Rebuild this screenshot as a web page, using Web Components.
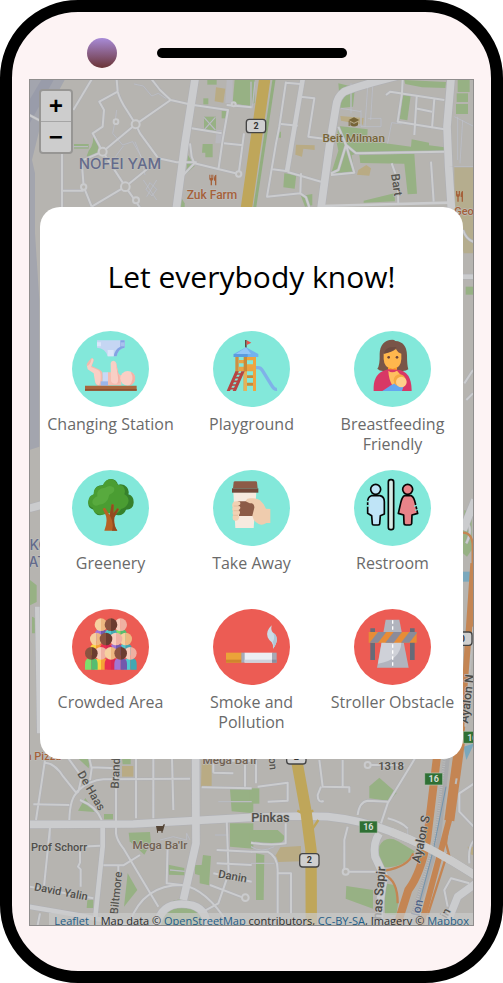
<!DOCTYPE html>
<html lang="en">
<head>
<meta charset="utf-8">
<meta name="viewport" content="width=device-width, initial-scale=1">
<title>Let everybody know!</title>
<style>
  body { margin: 0; background: #fff; font-family: "Open Sans", "Noto Sans", sans-serif; }
</style>
</head>
<body>
<phone-frame>
  <city-map></city-map>
  <report-dialog heading="Let everybody know!">
    <report-tile icon="changing">Changing Station</report-tile>
    <report-tile icon="playground">Playground</report-tile>
    <report-tile icon="feeding">Breastfeeding Friendly</report-tile>
    <report-tile icon="tree">Greenery</report-tile>
    <report-tile icon="coffee">Take Away</report-tile>
    <report-tile icon="restroom">Restroom</report-tile>
    <report-tile icon="crowd" alert>Crowded Area</report-tile>
    <report-tile icon="smoke" alert>Smoke and Pollution</report-tile>
    <report-tile icon="obstacle" alert>Stroller Obstacle</report-tile>
  </report-dialog>
</phone-frame>

<script>
class PhoneFrame extends HTMLElement {
  constructor() {
    super();
    this.attachShadow({ mode: "open" }).innerHTML = `
      <style>
        :host { display: flex; flex-direction: column; box-sizing: border-box; min-height: 100vh;
          border: 12px solid #000; border-radius: 78px; background: #fdf3f4; padding: 0 17px 45px; }
        header { display: grid; grid-template-columns: 1fr 190px 1fr; align-items: center;
          height: 67px; padding-top: 14px; box-sizing: border-box; }
        .camera { width: 30px; height: 30px; border-radius: 50%; margin-left: 58px;
          background: linear-gradient(#a88bd8, #6b3436); }
        .speaker { height: 10px; border-radius: 5px; background: #000; }
        main { flex: 1; display: grid; border: 1px solid #8f8d8d; overflow: hidden; }
        ::slotted(*) { grid-area: 1 / 1; }
      </style>
      <header><span class="camera"></span><span class="speaker"></span></header>
      <main><slot></slot></main>`;
  }
}

/* Map geometry is in thirds of a pixel; each group of shapes has its own origin. */
const areas = [
  { at: [0, 0], water: ["M88 238H195L150 320 118 390 96 480 105 520 105 700 118 900 118 1340 88 1350z"],
    deep: ["M125 238H162L88 372V300z"],
    green: ["M278 395Q302 425 292 458 275 480 260 468L266 452Q285 430 278 395z", "M222 432h44v14h-44z", "M622 240h28v14h-28z", "M610 295h15v18h-15z",
      "M665 333h15v22h-15z", "M704 238h60v70l-16 12-50-12z", "M612 350h36v42h-36z", "M608 432h30v40h-22v-14h-10z",
      "M564 465l20 34-26 22z", "M542 590l12 20v20h-14z", "M90 1740l20 16 0 50-20 10z", "M96 1850q24 6 14 50h-14z"],
    tan: ["M648 262l28 4-6 42-26-4z"], pale: ["M680 240h18v70h-22z", "M650 390h16v40h-20z"] },
  { at: [753, 0],
    green: ["M262 250l50 12-6 58-38 4z", "M455 285l24 2-10 74-23-4z", "M460 240l125 6-2 18-70-2-50-10z",
      "M620 240h36v36h-36z", "M617 280h34v26h-34z", "M615 312h36v30h-36z",
      "M262 378l20 2 68 8-2 34 132 18 2-22 52 10v8l46 6v16H320l-18 8 8 52-70 4 22-70-6-30z",
      "M325 465l165-4 8 120-28 2-10-92-132-2z", "M100 520l36 4-5 42-34-4z", "M150 588l34-6v34l-22 4z",
      "M338 602l92-22 2 24-94 4z", "M78 395h12v18h-14z", "M640 1530l22 10v110l-14 20-14-12z", "M644 860h26v24h-26z"],
    tan: ["M268 348l70 6-2 20-66-12z", "M135 434l56 2v14l-34-4-4 24-20-6z", "M322 510l24-15 14 10-5 22-37-3z"],
    pale2: ["M610 500h58v260h-30l-28-130z"], pale: [], blue: ["M636 1715h34v30h-34z", "M638 2240l32-10-24 50z"] },
  { at: [0, 2220],
    green: ["M234 212l22-38 28 42z", "M312 222h27v16h-27z", "M386 278l64-2 3 32-20 36-44-40z", "M383 400l29 50-40 50z",
      "M505 374l48 10v22l-46-2z", "M585 375h20l4-30 24 3-6 88-28-6v-24l-14-4z", "M690 148h70v72l-65-6z",
      "M690 250h70v76l-70-6z", "M262 480h18v24h-20z", "M366 55h26v18h-24z", "M234 55h36l-4 30z", "M480 520a66 50 0 0 1 130 0v40H480z"],
    tan: ["M366 78h34v32h-34z", "M605 60h30v80h-32z"] },
  { at: [753, 2220],
    green: ["M355 175v-36l30-26 52 46-22 24z", "M385 318q20-34 56-14l50 30q-34 56-96 46-14-20-10-62z", "M286 438l80 12v56l-82-30z",
      "M-4 270h84l24 22-20 26-88-4z", "M15 340l25 5-2 135H15z", "M400 430l34 6 8 50-6 40-34-4z", "M-4 145h29v46H-4z"],
    tan: ["M74 346l14-24 62-4v46l-68 2z", "M650 320h20v26l-16-4z"] }
];

const lanes = [
  { at: [0, 0], thin: ["M350 330l-4 30-8 40 30 35 30-10 34 60M346 470l24-32M405 425l20 50 10 50M430 540l40 60M470 540l-30 50M402 252l28 6 25 30 20-8 24 16", "M220 440h44M450 548l20 20-14 20-18-20z", "M612 352l34 38M646 352l-34 38"],
    minor: ["M275 238L220 330", "M350 238L353 275Q360 300 380 330L407 373 308 455M353 275L298 305 312 330 308 380 278 400 308 455",
      "M455 238L480 270 512 300 407 373M512 300L565 312", "M407 373L420 400 475 475 530 487H590", "M308 455L376 560 475 480M376 560L425 630M376 560L275 620",
      "M308 455L245 482 251 560 275 620M186 460V630M186 572H251M88 345L120 362", "M575 314L684 330 668 420 655 510M575 385L665 400M672 430L730 436M583 490L716 522 732 400M570 430L575 470 583 490 550 525M680 315L755 322"],
    wide: ["M585 238L555 430 527 640", "M88 1525L125 1515"], mid: ["M112 1820L118 2200"] },
  { at: [753, 0], thin: ["M350 260l-8 120M365 260l-6 100M300 250v90M270 325l60 10M330 330v50h60v-25h-40M410 430l12-62 30 4M610 350l60 30M620 350v130M635 360l-8 130M610 500h60M0 245v80M12 245l-8 80"],
    minor: ["M105 245L85 380 75 430 48 590 148 580 165 592 176 625M105 248L148 252M148 290L190 295 172 410 230 418M90 372L140 377M65 508L110 514M150 520L148 580M110 516L210 545",
      "M405 285L418 275 580 300M455 238L453 280 440 365 580 388M497 290L490 405M493 325L543 335M550 296L543 385",
      "M285 435L315 460 580 455M285 435L262 380M285 435L262 510 240 520M285 435L310 518 240 525M422 490L440 540 442 615M540 485L548 605", "M636 690q10 30 34 36M640 1150l26-40M646 1200l20-20M640 1560q30 20 6 70"],
    mid: ["M155 238L108 515", "M636 830H670"], minor2: [],
    wide: ["M440 228Q330 255 280 275 258 290 255 320L235 440 208 640", "M600 238L588 380 593 500 602 640", "M636 1590L672 1500"] },
  { at: [0, 2220], thin: ["M480 300l40-10 40 10v-20l10 20M510 390l44 4M150 262l4 60M645 285h40M655 185h100"],
    minor: ["M135 60L108 240M135 68Q165 70 190 110L230 160M205 55L245 110 235 155Q210 170 208 240M100 193L208 195M230 155Q270 120 310 118L570 116M268 55L275 85 270 120M275 82L350 85M348 55V280Q350 300 370 325L475 500M408 55V235M460 55V235M516 55L520 210M240 180Q290 200 305 240",
      "M150 262L132 440M300 317L240 320V368l-6 12 8 8V440M310 376H370L420 345M355 376V410M503 315L500 430 545 435M88 440L280 475M120 520L112 560M605 142L755 145M640 98L700 100M640 60V98M683 62H755M735 62V140M680 240L686 400 655 490 600 520M650 330L755 335M650 370L755 375M640 400L755 425M630 435L735 475",
      "M390 545Q430 435 545 435 620 445 690 560"],
    mid: ["M308 262V320L286 530", "M88 500L250 528 400 560"], wide: ["M80 253L400 252 755 232", "M587 50L588 310 550 480", "M470 560Q480 492 545 492 620 492 622 560"] },
  { at: [753, 2220], thin: ["M0 370h70M470 265V285", "M0 320q30 20 70 0"],
    minor: ["M275 60V140M205 60L215 140 295 142V158M210 140L200 165Q200 190 218 183M350 75H460M492 55L410 190 390 250M320 225Q325 185 350 182L410 185M410 235Q450 245 470 265",
      "M290 260L280 300V395H375M80 400H120V520M0 335H50Q80 350 80 390V520M20 140L110 128V182L50 185M15 60V130M0 308Q60 318 104 310V250", "M670 130L625 160V215L668 260M670 300Q650 320 655 370M655 430L600 415 580 450 590 500"],
    mid: [], wide: ["M-4 232L150 228 230 230Q330 240 420 275 540 320 675 408", "M385 280Q365 310 372 350L400 410Q385 470 385 545", "M675 430L620 470 590 545"] }
];

const dots = [[407,373,12],[308,455,12],[376,560,13],[251,561,8],[408,601,9],[716,522,8],[701,313,6],[348,365,7],[1103,2295,9],[1037,2615,9],[736,2693,10]];

const shields = [
  { x: 739, y: 358, t: "2" }, { x: 860, y: 2252, t: "2" }, { x: 899, y: 2561, t: "2" }, { x: 1358, y: 1896, t: "0" },
  { x: 1078, y: 2463, t: "16", g: 1 }, { x: 1274, y: 2319, t: "16", g: 1 }, { x: 1390, y: 2194, t: "16", g: 1 }
];

const labels = [
  [360, 508, "NOFEI YAM", "#646b8c", 45, 0, "Inter"],
  [636, 598, "Zuk Farm", "#a5613a", 36], [1061, 425, "Beit Milman", "#776537", 35],
  [1178, 556, "Bart", "#55544f", 36, 82], [1392, 646, "Geo", "#a5613a", 33],
  [118, 1650, "KO", "#646b8c", 42, 0, "Inter"], [112, 1702, "AT", "#646b8c", 42, 0, "Inter"],
  [130, 2280, "n Pizza", "#a5613a", 33], [358, 2320, "Brand", "#55544f", 35, -88], [264, 2378, "De Haas", "#55544f", 35, 60],
  [177, 2552, "Prof Schorr", "#4f4e4a", 33], [480, 2546, "Mega Ba'Ir", "#716152", 35], [690, 2291, "Mega Ba'Ir", "#716152", 35],
  [181, 2686, "David Yalin", "#4f4e4a", 33, 11], [360, 2680, "Biltmore", "#55544f", 34, -84], [696, 2640, "Danin", "#4f4e4a", 34, 10],
  [811, 2466, "Pinkas", "#4f4e4a", 38], [1173, 2310, "1318", "#4f4e4a", 34], [808, 2292, "on", "#55544f", 33, 85],
  [1275, 2520, "Ayalon S", "#4c4a47", 37, -78], [1413, 2098, "Ayalon N", "#4c4a47", 37, -83],
  [1150, 2680, "has Sapir", "#4c4a47", 38, -85], [1264, 2726, "lon", "#4e6288", 36, -78], [1346, 2745, "in", "#55544f", 34, -60]
];

const group = (sets, kind, cls) => sets.map(s =>
  `<g class="${cls}" transform="translate(${s.at})">${(s[kind] || []).map(d => `<path d="${d}"/>`).join("")}</g>`).join("");

class CityMap extends HTMLElement {
  constructor() {
    super();
    const roads = ["thin", "minor", "mid", "wide"];
    this.attachShadow({ mode: "open" }).innerHTML = `
      <style>
        :host { display: block; position: relative; overflow: hidden; background: #b6b4b0; min-width: 0; }
        svg { position: absolute; inset: 0; width: 100%; height: 100%; }
        .water { fill: #a3a5ae; } .deep { fill: #999caa; } .green { fill: #97b184; } .tan { fill: #b9ab84; }
        .pale { fill: #b9b9be; } .pale2 { fill: #b5ad8e; } .blue { fill: #7aa8bd; }
        .case, .road, .line { fill: none; stroke-linejoin: round; }
        .case { stroke: #afb0b5; } .road { stroke: #cbccce; }
        .case.thin { stroke-width: 4px; } .road.thin { stroke-width: 2px; stroke: #c3c4c8; }
        .case.minor { stroke-width: 9px; } .road.minor { stroke-width: 6px; }
        .case.mid { stroke-width: 17px; } .road.mid { stroke-width: 14px; }
        .case.wide { stroke-width: 26px; } .road.wide { stroke-width: 23px; }
        .dots { fill: #b6b4b0; stroke: #cacbcd; stroke-width: 6px; }
        text { font-family: Roboto, "Open Sans", sans-serif; font-weight: 500; text-anchor: middle;
          paint-order: stroke; stroke: #bdbcb9; stroke-width: 4px; stroke-linejoin: round; }
        .badge text { font-weight: 700; font-size: 27px; fill: #333; stroke: none; }
        .badge rect { fill: #cfcfcf; stroke: #444; stroke-width: 4px; }
        .badge.g rect { fill: #2f7034; stroke: #b9c6b6; stroke-width: 2px; } .badge.g text { fill: #d5ddd4; }
        .zoom { position: absolute; left: 9px; top: 9px; display: flex; flex-direction: column;
          border: 2px solid #979694; border-radius: 4px; background: #a5a5a5; gap: 1px; }
        button { box-sizing: border-box; width: 30px; height: 30px; padding: 4px 0 0; border: 0; background: #cdcdcd; color: #000;
          font: 700 24px/26px "Liberation Mono", monospace; }
        button:first-child { border-radius: 2px 2px 0 0; } button:last-child { border-radius: 0 0 2px 2px; }
        footer { position: absolute; right: 0; bottom: 0; height: 12px; padding: 0 4px 0 5px; overflow: hidden;
          background: rgba(202, 202, 202, .7); color: #2c2c2c; font-size: 11px; line-height: 15px; white-space: nowrap; }
        a { color: #1f5d87; text-decoration: none; }
      </style>
      <svg viewBox="90 240 1329 2535" preserveAspectRatio="xMidYMid slice" role="img" aria-label="City map">
        ${["water", "deep", "pale", "pale2", "green", "tan", "blue"].map(k => group(areas, k, k)).join("")}
        <path class="line" stroke="#92ae7f" stroke-width="9" d="M822 238L763 630"/>
        ${roads.map(k => group(lanes, k, "case " + k)).join("")}
        ${roads.map(k => group(lanes, k, "road " + k)).join("")}
        <path class="line" stroke="#cbccce" stroke-width="8" d="M963 618L1353 608"/>
        <g class="dots">${dots.map(d => `<circle cx="${d[0]}" cy="${d[1]}" r="${d[2]}"/>`).join("")}</g>
        <g class="line" stroke="#bfa65a">
          <path stroke-width="34" d="M794 238L737 640M888 2270L918 2435 933 2550 934 2790"/>
          <path stroke-width="7" d="M892 2432L918 2445M940 2432L918 2440M955 2460L932 2495"/>
        </g>
        <path class="line" stroke="#a9aaac" stroke-width="20" d="M1340 2270L1312 2520 1232 2780"/>
        <path class="line" stroke="#bcbcbc" stroke-width="8" stroke-dasharray="3 4" d="M1334 2270L1306 2520 1226 2780"/>
        <path class="line" stroke="#7394ad" stroke-width="3" d="M1338 2360L1300 2550 1250 2740"/>
        <g class="line" stroke="#c48553">
          <path stroke-width="24" d="M1311 2270L1281 2520Q1263 2620 1225 2670L1190 2780"/>
          <path stroke-width="18" d="M1350 2450L1310 2600 1262 2780"/>
          <path stroke-width="30" d="M1380 2225L1348 2462"/>
          <path stroke-width="22" d="M1422 1690L1400 2010 1380 2230"/>
          <path stroke-width="7" d="M1388 1598Q1418 1598 1418 1640V1720M1347 2460L1338 2530 1348 2568M1240 2560Q1225 2600 1153 2612M1153 2625Q1193 2640 1193 2710M1342 2560L1283 2745"/>
        </g>
        <path class="line" stroke="#cbcbcb" stroke-width="23" d="M1173 2495Q1293 2540 1425 2626"/>
        <path class="line" stroke="#bdbdbd" stroke-width="6" d="M1370 2335L1367 2352M1420 1880L1396 2180"/>
        ${shields.map(s => `<g class="badge ${s.g ? "g" : ""}" transform="translate(${s.x} ${s.y})">
          <rect width="${s.g ? 54 : 58}" height="${s.g ? 36 : 40}" rx="${s.g ? 2 : 9}"/><text x="${s.g ? 27 : 29}" y="${s.g ? 28 : 29}">${s.t}</text></g>`).join("")}
        <g fill="#a5613a"><path d="M628 524v12q0 5 4 6v14h4v-14q4-1 4-6v-12h-3v10h-2v-10h-2v10h-2v-10zM648 524q-7 2-6 18h3v14h4v-32zM1368 573v12q0 5 4 6v14h4v-14q4-1 4-6v-12h-3v10h-2v-10h-2v10h-2v-10zM1388 573q-7 2-6 18h3v14h4v-32z"/></g>
        <path fill="#776537" d="M1046 360l16-8 16 8-16 8zM1051 366l11 5 12-5v10q-12 7-23 0zM1046 362h3v16h-3z"/>
        <path fill="#554536" d="M468 2478h20l3-5h4l-6 20h-18zM471 2493h3v5h-3zM484 2493h4v5h-4z"/>
        ${labels.map(l => `<text transform="translate(${l[0]} ${l[1]}) rotate(${l[5] || 0})" fill="${l[3]}" style="font-size:${l[4]}px${l[6] ? ";font-family:" + l[6] : ""}">${l[2]}</text>`).join("")}
      </svg>
      <div class="zoom"><button type="button" aria-label="Zoom in">+</button><button type="button" aria-label="Zoom out">−</button></div>
      <footer><a href="#leaflet">Leaflet</a> | Map data © <a href="#osm">OpenStreetMap</a> contributors, <a href="#license">CC-BY-SA</a>, Imagery © <a href="#mapbox">Mapbox</a></footer>`;
  }
}

class ReportDialog extends HTMLElement {
  constructor() {
    super();
    this.attachShadow({ mode: "open" }).innerHTML = `
      <style>
        :host { display: block; position: relative; align-self: start; margin: 127px 10px 0; padding: 48px 0 11px;
          border-radius: 20px; background: #fff; }
        h1 { margin: 0 0 32px; color: #000; font-size: 30px; font-weight: 400; line-height: 44px; text-align: center; }
        .grid { display: grid; grid-template-columns: repeat(3, minmax(0, 1fr)); grid-auto-rows: minmax(139px, auto); }
      </style>
      <h1></h1>
      <div class="grid"><slot></slot></div>`;
  }
  connectedCallback() {
    this.shadowRoot.querySelector("h1").textContent = this.getAttribute("heading");
  }
}

const person = (x, y, skin, shade, top, dark) =>
  `<path fill="${top}" d="M${x - 19} ${y + 49}v-17q0-15 12-18h7v35z"/><path fill="${dark}" d="M${x} ${y + 49}v-35h7q12 3 12 18v17z"/>
   <path fill="${skin}" d="M${x} ${y - 19}a19 19 0 0 0 0 38z"/><path fill="${shade}" d="M${x} ${y - 19}a19 19 0 0 1 0 38z"/>`;
const tan = ["#f6d0a0", "#edb780"], brown = ["#8b5340", "#6b3c30"], pink = ["#f8cdbd", "#efb0a2"];
const green = ["#7ddf6c", "#56bd70"], yellow = ["#fbd643", "#f6a136"], red = ["#e8304f", "#d92a55"], purple = ["#a176d4", "#7259ac"], teal = ["#50cad0", "#43a7b2"];

const icons = {
  changing: ["96 63 231 228", `
    <path fill="#c5d6f3" d="M171 91h83v22q-20 3-24 26h-27q-6-24-32-26z"/><path fill="#84a3e3" d="M241 91h13v22q-20 3-24 26h-9q3-22 20-29z"/>
    <path fill="#dce6fa" d="M171 97h12v12h-12zM203 120h18v19h-18z"/><path fill="#a9c0ee" d="M242 97h12v12h-12z"/>
    <path fill="#f3b9ad" d="M147 152l8-8q6 1 6 8l-6 16 24 11q9 5 9 15v33h-14q-8-2-8-13l-4-28-20-16q-6-5 5-18z"/>
    <path fill="#f9cfc5" d="M141 168q10-3 14-22 7-3 5 7l-7 18 20 8q9 5 9 15v14q0 10-5 18-10-2-12-12l-4-24-18-12z"/>
    <path fill="#f5bdb0" d="M202 187h27l15 10v29h-42z"/><path fill="#c9d8f6" d="M188 187h16v40h-20q6-8 4-40z"/><path fill="#9ab5ea" d="M182 214h22v13h-22z"/>
    <path fill="#f9cfc5" d="M212 160q1-8 8-8t9 8l10 54q-3 8-12 7-13-1-14-9z"/><path fill="#f3b2a6" d="M227 156l12 49v14l-10 3q7-5 5-20z"/>
    <circle cx="263" cy="205" r="22" fill="#f9cfc5"/><path fill="#f3b2a6" d="M272 185a22 22 0 0 1-5 42q18-18 5-42z"/>
    <path fill="#a8663d" d="M135 227h155v15H135z"/><path fill="#8e5131" d="M135 237h155v5H135z"/>`],
  playground: ["99 63 231 228", `
    <path fill="#5d4a42" d="M195 90h5v27h-5z"/><path fill="#e9504b" d="M200 91l14 7-14 7z"/>
    <path fill="#cf9040" d="M166 140h10v48h-10z"/><path fill="#e9a344" d="M176 150h18v10h-18zM176 170h52v14h-52z"/>
    <path fill="#c98a38" d="M191 140h10v103h-10z"/><path fill="#efa440" d="M201 140h27v11h-27zM219 140h9v103h-9zM201 163h18v8h-18z"/>
    <path fill="#c98a38" d="M201 196h18v8h-18zM201 218h18v9h-18z"/><path fill="#e5b259" d="M191 184h10v59h-10z"/>
    <path fill="#72b3ef" d="M198 112l37 20v9h-74v-9z"/><path fill="#93c7f8" d="M198 112l-30 20h45z"/><path fill="#5b9ce0" d="M161 132h42v9h-42z"/>
    <path fill="#b74543" d="M166 184h10l-26 59h-10zM184 184h10l-26 59h-10z"/><path stroke="#b74543" stroke-width="5" d="M168 192h19M163 203h19M158 214h20M153 225h20M149 236h18"/>
    <path fill="none" stroke="#7fb2e8" stroke-width="10" d="M228 173h6q8 0 13 8l26 42q9 16 18 15"/>`],
  feeding: ["102 63 231 228", `
    <path fill="#795548" d="M172 176q8-10 7-45 2-41 38-42 6 0 9 4 34 2 35 43 0 30 4 42-8 6-20 5h-53q-13 1-20-7z"/>
    <path fill="#ffb74d" d="M191 131q22-3 37-14 6 12 16 14v16q-1 27-26 31-26-4-27-31z"/><path fill="#6d4c41" d="M192 131q3-15 18-19l20-1q-14 15-38 20z"/>
    <path fill="#ff9f28" d="M204 171q14 10 27 0v18h-27z"/><path fill="#d83866" d="M161 243q-3-46 28-60l15-5 28 1q43 3 43 64z"/>
    <path fill="#ffbf5f" d="M205 182q10 9 26 0l14 16-20 26-8 3q-11-20-12-45z"/>
    <circle cx="206" cy="142" r="4" fill="#6d4337"/><circle cx="231" cy="142" r="4" fill="#6d4337"/>
    <path fill="#64a6f0" d="M187 243l26-17 15-8 22 13-4 12z"/><circle cx="239" cy="211" r="18" fill="#f5a944"/><circle cx="244" cy="216" r="16" fill="#ffd08a"/>`],
  tree: ["96 30 231 228", `
    <path fill="#36812b" d="M190 75q8-18 24-18 15 1 20 17 17-4 26 7 9 10 5 22 17 5 16 25-1 20-23 21-6 19-29 16l-24-8-20 8q-20 3-24-16-18-5-16-23 2-18 19-24-4-27 26-27z"/>
    <path fill="#4a9d32" d="M188 77q8-20 24-20 15 1 21 18 15-2 19 8 5 10 1 20 17 10 11 27-6 14-21 17-10 21-38 12-20 8-30 3-16-3-16-18-16-6-14-21 2-16 16-20-2-26 27-26z"/>
    <path fill="#58aa3e" d="M195 83q15-10 27 0 5 13-14 21-5 28-31 30-14 8-20-5-1-14 15-20-4-24 23-26z"/>
    <path fill="#b66226" d="M188 146l7-3 14 22 7-34 5 3-1 26 12-15 5 3-14 24q-3 25 9 40h-39q10-24 5-44z"/><path fill="#934b20" d="M209 165l6-32 6 1-1 26 12-15 5 3-14 24q-3 25 9 40h-16q7-24-7-47z"/>`],
  coffee: ["520 30 231 228", `
    <path fill="#f7eadf" d="M581 97h69l-8 107h-55z"/><path fill="#8c5b47" d="M582 66q1-2 4-2h62q4 0 4 3l2 18h-74z"/><path fill="#74493a" d="M577 85h79v13h-79z"/>
    <path fill="#8c5b47" d="M594 124h40l13 10v34h-49z"/><path fill="#efccae" d="M618 122q4-8 16-7 18-1 27 6 10 8 18 25l13 1v42h-12q-12 9-23 3-15-6-19-25l6-24q1-9-7-13-14-1-19-8z"/>
    <path fill="#f2d1b3" d="M579 130q1-6 11-6 11-1 12 4 1 8-9 9 10-1 9 7-2 7-9 7 9 0 8 8-1 7-7 7 6 1 4 8-2 10-12 8-8-1-7-8-1-6 2-9-4-5-1-12-4-4-1-10-3-7 0-13z"/>
    <path stroke="#dfb696" stroke-width="2" d="M582 138h16M582 152h16M581 166h14"/>`],
  restroom: ["312 30 231 228", `
    <g stroke="#050505" stroke-width="5" stroke-linejoin="round"><rect x="415" y="59" width="16" height="150" rx="7" fill="#d7ebe6"/>
    <circle cx="377" cy="88" r="15" fill="#bfe4f7"/><path fill="#bfe4f7" d="M364 107h26q13 3 13 18v37l-12 5-2 25q-1 3-5 3h-13q-4 0-4-3l-2-25-12-7v-35q0-14 11-18z"/>
    <circle cx="473" cy="88" r="15" fill="#e98389"/><path fill="#e98389" d="M463 107h21q8 4 12 23l7 30-17 5-1 26q-1 4-6 4h-11q-6 0-6-5l-1-25-16-5 8-35q4-15 10-18z"/></g>
    <path fill="#83e8da" d="M349 122h10v5h-10zM349 135h10v5h-10zM491 137l12-4v4l-10 4zM495 149l9-2v3l-8 3z"/>`],
  crowd: ["96 28 231 228",
    person(183, 75, ...tan, ...purple) + person(242, 75, ...pink, ...green) + person(213, 75, ...brown, ...teal) +
    person(169, 118, ...tan, ...yellow) + person(257, 118, ...tan, ...teal) + person(228, 118, ...pink, ...purple) + person(198, 118, ...brown, ...red) +
    person(183, 161, ...pink, ...yellow) + person(271, 161, ...pink, ...teal) + person(213, 161, ...tan, ...red) + person(154, 161, ...brown, ...green) + person(242, 161, ...brown, ...purple)],
  smoke: ["520 28 231 228", `
    <path fill="#eba339" d="M559 159h47v30h-47z"/><path fill="#cf852e" d="M559 180h47v9h-47z"/><path fill="#a5abb9" d="M605 159h11v30h-11z"/>
    <path fill="#eceef3" d="M615 159h83v30h-83z"/><path fill="#ced2db" d="M615 180h83v9h-83z"/><path fill="#a7a9b5" d="M697 159h14v30h-14z"/><path fill="#8b8e9e" d="M697 180h14v9h-14z"/>
    <path fill="#cbdbe5" d="M696 77q-19 18-12 36 4 9 12 15 6 8 4 19 16-20 10-36-4-9-11-13-6-6-3-21z"/><path fill="#afc7d6" d="M701 100q8 3 10 13 3 16-11 34 4-13-1-20 8-10 2-27z"/>`],
  obstacle: ["312 28 231 228", `
    <path fill="#686b78" d="M361 86h14v95h-14zM480 86h14v95h-14z"/><path fill="#b1b4be" d="M407 60h41l28 144h-95z"/><path fill="#cfd1d8" d="M395 128h59q-2 54-70 64z"/>
    <path stroke="#fff" stroke-width="4" stroke-dasharray="10 8" d="M428 62v142"/><path fill="#e88c36" d="M356 97h144v32H356z"/>
    <path fill="#8b8b99" d="M384 97h25l-25 32h-25zM431 97h25l-25 32h-25zM478 97h22v4l-22 28h-25z"/>`]
};

class ReportTile extends HTMLElement {
  constructor() {
    super();
    this.attachShadow({ mode: "open" }).innerHTML = `
      <style>
        :host { display: block; --disc: #83e8da; }
        :host([alert]) { --disc: #ec5c54; }
        button { display: flex; flex-direction: column; align-items: center; gap: 7px; width: 100%; padding: 0 4px;
          border: 0; background: none; color: #6a6a6a; font: 400 16px/20px "Open Sans", "Noto Sans", sans-serif; text-align: center; }
        .disc { display: block; width: 77px; height: 76px; border-radius: 50%; background: var(--disc); }
        svg { display: block; width: 100%; height: 100%; }
      </style>
      <button type="button"><span class="disc"></span><span><slot></slot></span></button>`;
  }
  connectedCallback() {
    const [box, art] = icons[this.getAttribute("icon")];
    this.shadowRoot.querySelector(".disc").innerHTML = `<svg viewBox="${box}" aria-hidden="true">${art}</svg>`;
  }
}

customElements.define("phone-frame", PhoneFrame);
customElements.define("city-map", CityMap);
customElements.define("report-dialog", ReportDialog);
customElements.define("report-tile", ReportTile);
</script>
</body>
</html>
